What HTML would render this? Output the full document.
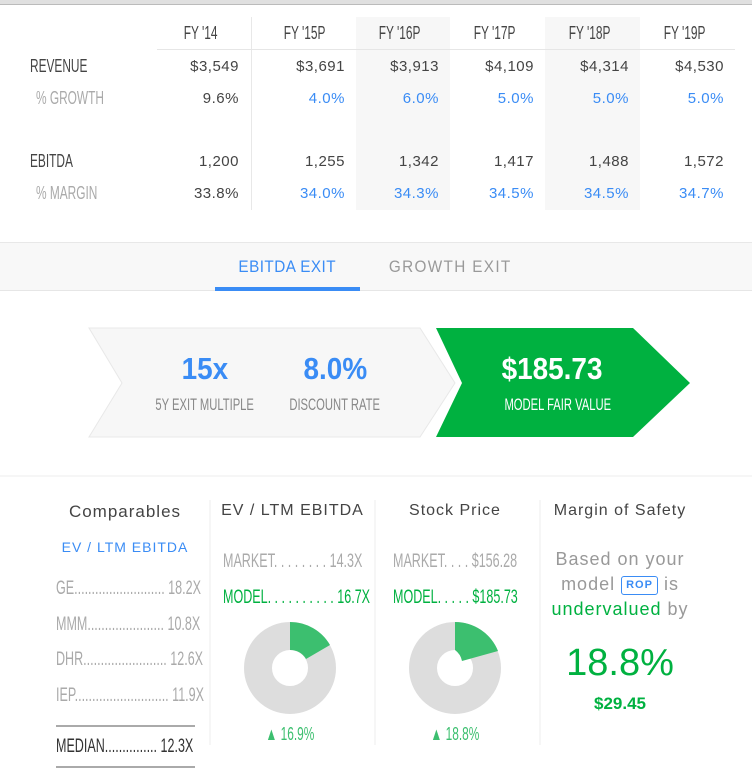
<!DOCTYPE html>
<html><head><meta charset="utf-8"><style>
*{margin:0;padding:0;box-sizing:border-box}
body{width:752px;height:772px;background:#fff;font-family:"Liberation Sans",sans-serif;position:relative;overflow:hidden;color:#333}
.a{position:absolute;white-space:nowrap}
.n{display:inline-block;transform:scaleX(.66);transform-origin:left center}
.nc{display:inline-block;transform:scaleX(.66);transform-origin:center center}
.v{font-size:15px;color:#444;text-align:right;width:90px;letter-spacing:.5px}
.b{color:#3a8cf5}
.g{color:#00b140}
</style></head><body>
<div class="a" style="left:0;top:0;width:752px;height:5px;background:#e0e0e0;border-bottom:1px solid #bbb"></div>
<div class="a" style="left:356px;top:17px;width:94px;height:193px;background:#f7f7f7"></div>
<div class="a" style="left:545px;top:17px;width:95px;height:193px;background:#f7f7f7"></div>
<div class="a" style="left:251px;top:17px;width:1px;height:193px;background:#e8e8e8"></div>
<div class="a" style="left:157px;top:49px;width:578px;height:1px;background:#e6e6e6"></div>
<div class="a" style="left:157px;top:23px;width:88px;text-align:center;font-size:18px;color:#444"><span class="nc">FY '14</span></div>
<div class="a" style="left:260px;top:23px;width:90px;text-align:center;font-size:18px;color:#444"><span class="nc">FY '15P</span></div>
<div class="a" style="left:355px;top:23px;width:90px;text-align:center;font-size:18px;color:#444"><span class="nc">FY '16P</span></div>
<div class="a" style="left:450px;top:23px;width:90px;text-align:center;font-size:18px;color:#444"><span class="nc">FY '17P</span></div>
<div class="a" style="left:545px;top:23px;width:90px;text-align:center;font-size:18px;color:#444"><span class="nc">FY '18P</span></div>
<div class="a" style="left:640px;top:23px;width:90px;text-align:center;font-size:18px;color:#444"><span class="nc">FY '19P</span></div>
<div class="a" style="left:30px;top:56px;font-size:18px;color:#444"><span class="n">REVENUE</span></div>
<div class="a" style="left:36px;top:88px;font-size:18px;color:#aaa"><span class="n">% GROWTH</span></div>
<div class="a" style="left:30px;top:151px;font-size:18px;color:#444"><span class="n">EBITDA</span></div>
<div class="a" style="left:36px;top:183px;font-size:18px;color:#aaa"><span class="n">% MARGIN</span></div>
<div class="a v" style="left:149px;top:58px">$3,549</div><div class="a v" style="left:255px;top:58px">$3,691</div><div class="a v" style="left:349px;top:58px">$3,913</div><div class="a v" style="left:444px;top:58px">$4,109</div><div class="a v" style="left:539px;top:58px">$4,314</div><div class="a v" style="left:634px;top:58px">$4,530</div>
<div class="a v" style="left:149px;top:90px">9.6%</div><div class="a v b" style="left:255px;top:90px">4.0%</div><div class="a v b" style="left:349px;top:90px">6.0%</div><div class="a v b" style="left:444px;top:90px">5.0%</div><div class="a v b" style="left:539px;top:90px">5.0%</div><div class="a v b" style="left:634px;top:90px">5.0%</div>
<div class="a v" style="left:149px;top:153px">1,200</div><div class="a v" style="left:255px;top:153px">1,255</div><div class="a v" style="left:349px;top:153px">1,342</div><div class="a v" style="left:444px;top:153px">1,417</div><div class="a v" style="left:539px;top:153px">1,488</div><div class="a v" style="left:634px;top:153px">1,572</div>
<div class="a v" style="left:149px;top:185px">33.8%</div><div class="a v b" style="left:255px;top:185px">34.0%</div><div class="a v b" style="left:349px;top:185px">34.3%</div><div class="a v b" style="left:444px;top:185px">34.5%</div><div class="a v b" style="left:539px;top:185px">34.5%</div><div class="a v b" style="left:634px;top:185px">34.7%</div>
<div class="a" style="left:0;top:242px;width:752px;height:49px;background:#f8f8f8;border-top:1px solid #e8e8e8;border-bottom:1px solid #e6e6e6"></div>
<div class="a b" style="left:215px;top:257px;width:145px;text-align:center;font-size:17px;letter-spacing:.5px"><span class="nc" style="transform:scaleX(.9)">EBITDA EXIT</span></div>
<div class="a" style="left:215px;top:287px;width:145px;height:4px;background:#3a8cf5"></div>
<div class="a" style="left:370px;top:257px;width:160px;text-align:center;font-size:17px;letter-spacing:1.5px;color:#999"><span class="nc" style="transform:scaleX(.9)">GROWTH EXIT</span></div>
<svg class="a" style="left:0;top:0" width="752" height="772">
<polygon points="89,328 420,328 455,383 420,437 89,437 122,383" fill="#f7f7f7" stroke="#e8e8e8" stroke-width="1"/>
<polygon points="436,328 633,328 690,383 633,437 436,437 462,383" fill="#00b140"/>
<line x1="0" y1="476" x2="752" y2="476" stroke="#eee"/>
<line x1="210" y1="500" x2="210" y2="745" stroke="#eee"/>
<line x1="375" y1="500" x2="375" y2="745" stroke="#eee"/>
<line x1="540" y1="500" x2="540" y2="745" stroke="#eee"/>
<circle cx="290" cy="668" r="32" fill="none" stroke="#ddd" stroke-width="28"/>
<path d="M290,622 A46,46 0 0 1 330,645 L306,659 A18,18 0 0 0 290,650 Z" fill="#3cbf6f"/>
<circle cx="455" cy="668" r="32" fill="none" stroke="#ddd" stroke-width="28"/>
<path d="M455,622 A46,46 0 0 1 498,651 L462,661 A18,18 0 0 0 455,650 Z" fill="#3cbf6f"/>
<line x1="56" y1="726" x2="195" y2="726" stroke="#555"/>
<line x1="56" y1="767" x2="195" y2="767" stroke="#555"/>
</svg>
<div class="a b" style="left:150px;top:351px;width:110px;text-align:center;font-size:31px;font-weight:bold"><span class="nc" style="transform:scaleX(.9)">15x</span></div>
<div class="a" style="left:130px;top:395px;width:150px;text-align:center;font-size:17px;color:#888"><span class="nc">5Y EXIT MULTIPLE</span></div>
<div class="a b" style="left:280px;top:351px;width:110px;text-align:center;font-size:31px;font-weight:bold"><span class="nc" style="transform:scaleX(.9)">8.0%</span></div>
<div class="a" style="left:260px;top:395px;width:150px;text-align:center;font-size:17px;color:#888"><span class="nc">DISCOUNT RATE</span></div>
<div class="a" style="left:482px;top:351px;width:140px;text-align:center;font-size:31px;font-weight:bold;color:#fff"><span class="nc" style="transform:scaleX(.9)">$185.73</span></div>
<div class="a" style="left:477px;top:395px;width:150px;text-align:center;font-size:17px;color:#fff"><span class="nc">MODEL FAIR VALUE</span></div>
<div class="a" style="left:45px;top:502px;width:160px;text-align:center;font-size:17px;color:#444;letter-spacing:1px">Comparables</div>
<div class="a b" style="left:45px;top:539px;width:160px;text-align:center;font-size:14px;letter-spacing:1px">EV / LTM EBITDA</div>
<div class="a" style="left:56px;top:578px;font-size:19px;color:#aaa"><span class="n">GE.......................... 18.2X</span></div>
<div class="a" style="left:56px;top:614px;font-size:19px;color:#aaa"><span class="n">MMM...................... 10.8X</span></div>
<div class="a" style="left:56px;top:649px;font-size:19px;color:#aaa"><span class="n">DHR........................ 12.6X</span></div>
<div class="a" style="left:56px;top:685px;font-size:19px;color:#aaa"><span class="n">IEP........................... 11.9X</span></div>
<div class="a" style="left:56px;top:736px;font-size:19px;color:#333"><span class="n">MEDIAN............... 12.3X</span></div>
<div class="a" style="left:215px;top:502px;width:155px;text-align:center;font-size:16px;color:#444;letter-spacing:1px">EV / LTM EBITDA</div>
<div class="a" style="left:223px;top:551px;font-size:19px;color:#aaa"><span class="n">MARKET. . . . . . . .  14.3X</span></div>
<div class="a g" style="left:223px;top:587px;font-size:19px"><span class="n">MODEL. . . . . . . . . . 16.7X</span></div>
<div class="a" style="left:240px;top:724px;width:100px;text-align:center;font-size:18px;color:#3cbf6f"><span class="nc">▲ 16.9%</span></div>
<div class="a" style="left:380px;top:502px;width:150px;text-align:center;font-size:16px;color:#444;letter-spacing:1px">Stock Price</div>
<div class="a" style="left:393px;top:551px;font-size:19px;color:#aaa"><span class="n">MARKET. . . . $156.28</span></div>
<div class="a g" style="left:393px;top:587px;font-size:19px"><span class="n">MODEL. . . . . $185.73</span></div>
<div class="a" style="left:405px;top:724px;width:100px;text-align:center;font-size:18px;color:#3cbf6f"><span class="nc">▲ 18.8%</span></div>
<div class="a" style="left:545px;top:502px;width:150px;text-align:center;font-size:16px;color:#444;letter-spacing:1px">Margin of Safety</div>
<div class="a" style="left:545px;top:547px;width:150px;text-align:center;font-size:18px;color:#999;letter-spacing:1px;line-height:25px">Based on your<br>model <span style="display:inline-block;border:1.5px solid #3a8cf5;border-radius:3px;font-size:11px;font-weight:bold;color:#3a8cf5;padding:0 4px;line-height:17px;vertical-align:2px">ROP</span> is<br><span class="g">undervalued</span> by</div>
<div class="a g" style="left:545px;top:642px;width:150px;text-align:center;font-size:38px">18.8%</div>
<div class="a g" style="left:545px;top:694px;width:150px;text-align:center;font-size:17px;font-weight:bold">$29.45</div>
</body></html>
